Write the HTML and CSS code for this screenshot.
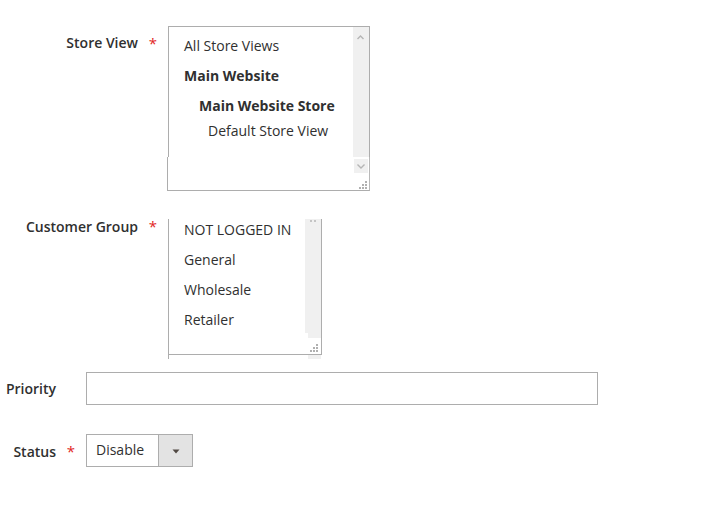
FILE: index.html
```html
<!DOCTYPE html>
<html>
<head>
<meta charset="utf-8">
<link rel="stylesheet" href="styles.css">
</head>
<body>
<div class="form">
  <div class="field wide row-store">
    <div class="label">Store View</div>
    <div class="req">*</div>
    <div class="store">
      <div class="store-top">
        <div class="list store-list">
          <div class="opt">All Store Views</div>
          <div class="opt bold">Main Website</div>
          <div class="opt bold ind1">Main Website Store</div>
          <div class="opt ind2 last">Default Store View</div>
        </div>
        <div class="sbar">
          <svg class="chev" width="16" height="14" viewBox="0 0 16 14"><path d="M4.5 10 L7.5 7 L10.5 10" fill="none" stroke="#b5b5b5" stroke-width="1.4"/></svg>
        </div>
      </div>
      <div class="store-bottom">
        <div class="down">
          <svg width="14" height="14" viewBox="0 0 14 14"><path d="M3.5 5.5 L7 9 L10.5 5.5" fill="none" stroke="#b5b5b5" stroke-width="1.4"/></svg>
        </div>
        <svg class="grip" width="10" height="10" viewBox="0 0 10 10"><g fill="#b0b0b0"><rect x="8" y="2" width="2" height="2"/><rect x="5" y="5" width="2" height="2"/><rect x="8" y="5" width="2" height="2"/><rect x="2" y="8" width="2" height="2"/><rect x="5" y="8" width="2" height="2"/><rect x="8" y="8" width="2" height="2"/></g></svg>
      </div>
    </div>
  </div>

  <div class="field wide row-group">
    <div class="label">Customer Group</div>
    <div class="req">*</div>
    <div class="groupwrap">
      <div class="group">
        <div class="list group-list">
          <div class="opt">NOT LOGGED IN</div>
          <div class="opt">General</div>
          <div class="opt">Wholesale</div>
          <div class="opt">Retailer</div>
        </div>
        <div class="gbar">
          <div class="gbar-track">
            <svg width="16" height="4" viewBox="0 0 16 4"><g fill="#c4c4c4"><rect x="5" y="0" width="2" height="2"/><rect x="9" y="0" width="2" height="2"/></g></svg>
          </div>
          <div class="gbar-tail"></div>
          <svg class="ggrip" width="8" height="9" viewBox="0 0 8 9"><g fill="#b0b0b0"><rect x="6" y="0" width="2" height="2"/><rect x="3" y="3" width="2" height="2"/><rect x="6" y="3" width="2" height="2"/><rect x="0" y="6" width="2" height="2"/><rect x="3" y="6" width="2" height="2"/><rect x="6" y="6" width="2" height="2"/></g></svg>
        </div>
      </div>
      <div class="group-foot"><div class="group-foot-strip"></div></div>
    </div>
  </div>

  <div class="field narrow row-priority">
    <div class="label">Priority</div>
    <div class="req"></div>
    <div class="input"></div>
  </div>

  <div class="field narrow row-status">
    <div class="label">Status</div>
    <div class="req">*</div>
    <div class="select">
      <div class="select-text">Disable</div>
      <div class="select-btn">
        <svg width="8" height="5" viewBox="0 0 8 5"><path d="M0.5 0.5 L7.5 0.5 L4 4.5 Z" fill="#514943"/></svg>
      </div>
    </div>
  </div>
</div>
</body>
</html>
```

FILE: styles.css
```css
html, body {
  margin: 0;
  padding: 0;
  background: #fff;
}
body {
  font-family: "Open Sans", "DejaVu Sans", sans-serif;
  font-size: 14px;
  color: #303030;
}
.form {
  padding-top: 26px;
}
.field {
  display: flex;
  align-items: flex-start;
}
.label {
  font-weight: 600;
  font-size: 14px;
  line-height: 19px;
  text-align: right;
  color: #303030;
  white-space: nowrap;
}
.wide .label { width: 138px; }
.narrow .label { width: 56px; }
.req {
  width: 30px;
  text-align: center;
  color: #e22626;
  font-size: 15px;
  line-height: 19px;
}
.row-store .label { padding-top: 7px; }
.row-store .req { padding-top: 8px; }

/* store view multiselect */
.store { width: 202px; }
.store-top {
  display: flex;
  height: 130px;
  border: 1px solid #adadad;
  border-bottom: none;
}
.list { flex: 1; overflow: hidden; }
.store-list { padding-top: 3px; }
.opt {
  line-height: 19px;
  padding: 5.5px 0 5.5px 15px;
  white-space: nowrap;
  color: #303030;
}
.bold { font-weight: 700; }
.ind1 { padding-left: 30px; }
.ind2 { padding-left: 39px; }
.last { margin-top: -5px; }
.sbar {
  width: 16px;
  background: #f0f0f0;
}
.chev { display: block; margin-top: 2px; }
.store-bottom {
  margin-left: -1px;
  height: 33px;
  border: 1px solid #adadad;
  border-top: none;
  border-right-color: #b8b8b8;
  display: flex;
  flex-direction: column;
  align-items: flex-end;
}
.down {
  width: 14px;
  height: 14px;
  margin-top: 2px;
  margin-right: 1px;
  background: #f0f0f0;
}
.down svg { display: block; }
.grip {
  display: block;
  margin-top: 6px;
  margin-right: 2px;
}

/* customer group */
.row-group { margin-top: 28px; }
.row-group .label,
.row-group .req { margin-top: -2px; }
.groupwrap { width: 154px; }
.group {
  display: flex;
  height: 135px;
  border: 1px solid #adadad;
  border-top: none;
}
.group-list { margin-top: -5px; }
.gbar {
  width: 16px;
  display: flex;
  flex-direction: column;
  align-items: flex-end;
}
.gbar-track {
  width: 16px;
  height: 114px;
  background: #f0f0f0;
}
.gbar-track svg { display: block; margin-top: 1px; }
.gbar-tail {
  width: 13px;
  height: 5px;
  background: #f0f0f0;
}
.ggrip {
  display: block;
  margin-top: 6px;
  margin-right: 3px;
}
.group-foot {
  height: 4px;
  border-left: 1px solid #adadad;
  display: flex;
  justify-content: flex-end;
}
.group-foot-strip {
  width: 13px;
  margin-right: 1px;
  background: #f0f0f0;
}

/* priority */
.row-priority {
  margin-top: 13px;
  align-items: center;
}
.input {
  width: 510px;
  height: 31px;
  border: 1px solid #adadad;
}

/* status */
.row-status {
  margin-top: 29px;
  align-items: center;
}
.row-status .label { padding-top: 1px; }
.row-status .req { padding-top: 2px; }
.select {
  display: flex;
  width: 105px;
  height: 31px;
  border: 1px solid #adadad;
}
.select-text {
  width: 62px;
  padding-left: 9px;
  line-height: 30px;
  color: #303030;
}
.select-btn {
  flex: 1;
  background: #e3e3e3;
  border-left: 1px solid #adadad;
  display: flex;
  align-items: center;
  justify-content: center;
}
.select-btn svg { display: block; margin-top: 1px; }
```
